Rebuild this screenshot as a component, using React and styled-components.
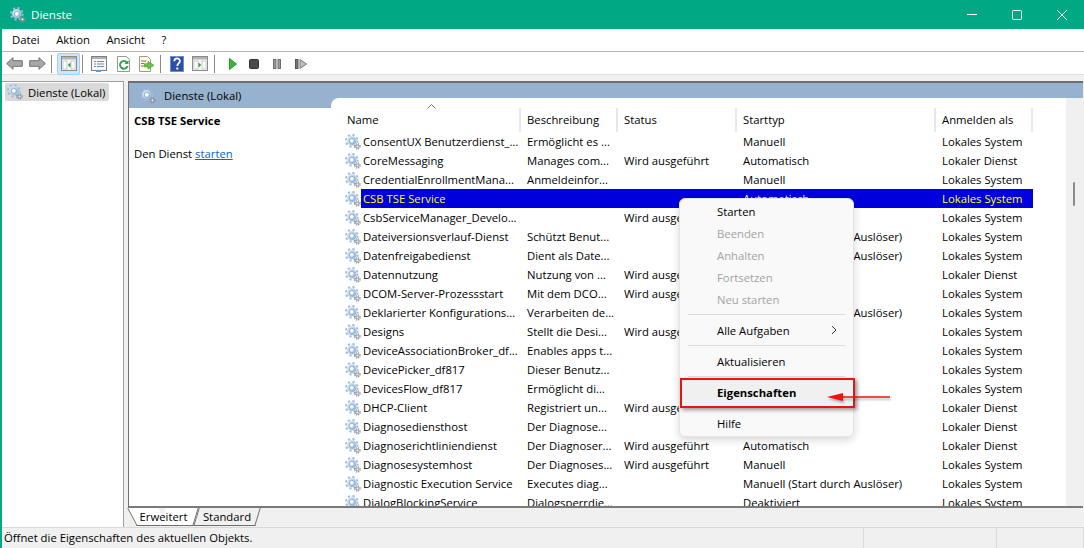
import * as React from "react";
import styled, { createGlobalStyle } from "styled-components";

const GlobalStyle = createGlobalStyle`
  html, body {
    margin: 0;
    padding: 0;
    background: #f0f0f0;
  }
  * {
    box-sizing: border-box;
  }
`;

const services = [
  ["ConsentUX Benutzerdienst_...", "Ermöglicht es ...", "", "Manuell", "Lokales System"],
  ["CoreMessaging", "Manages com...", "Wird ausgeführt", "Automatisch", "Lokaler Dienst"],
  ["CredentialEnrollmentMana...", "Anmeldeinfor...", "", "Manuell", "Lokales System"],
  ["CSB TSE Service", "", "", "Automatisch", "Lokales System"],
  ["CsbServiceManager_Develo...", "", "Wird ausgeführt", "Manuell", "Lokales System"],
  ["Dateiversionsverlauf-Dienst", "Schützt Benut...", "", "Manuell (Start durch Auslöser)", "Lokales System"],
  ["Datenfreigabedienst", "Dient als Date...", "", "Manuell (Start durch Auslöser)", "Lokales System"],
  ["Datennutzung", "Nutzung von ...", "Wird ausgeführt", "Automatisch", "Lokaler Dienst"],
  ["DCOM-Server-Prozessstart", "Mit dem DCO...", "Wird ausgeführt", "Automatisch", "Lokales System"],
  ["Deklarierter Konfigurations...", "Verarbeiten de...", "", "Manuell (Start durch Auslöser)", "Lokales System"],
  ["Designs", "Stellt die Desi...", "Wird ausgeführt", "Automatisch", "Lokales System"],
  ["DeviceAssociationBroker_df...", "Enables apps t...", "", "Manuell", "Lokales System"],
  ["DevicePicker_df817", "Dieser Benutz...", "", "Manuell", "Lokales System"],
  ["DevicesFlow_df817", "Ermöglicht di...", "", "Manuell", "Lokales System"],
  ["DHCP-Client", "Registriert un...", "Wird ausgeführt", "Automatisch", "Lokaler Dienst"],
  ["Diagnosediensthost", "Der Diagnose...", "", "Manuell", "Lokaler Dienst"],
  ["Diagnoserichtliniendienst", "Der Diagnoser...", "Wird ausgeführt", "Automatisch", "Lokaler Dienst"],
  ["Diagnosesystemhost", "Der Diagnoses...", "Wird ausgeführt", "Manuell", "Lokales System"],
  ["Diagnostic Execution Service", "Executes diag...", "", "Manuell (Start durch Auslöser)", "Lokales System"],
  ["DialogBlockingService", "Dialogsperrdie...", "", "Deaktiviert", "Lokales System"],
];

const columns = "190px 97px 119px 199px 97px";

const Window = styled.div`
  position: relative;
  width: 1084px;
  height: 548px;
  display: flex;
  flex-direction: column;
  overflow: hidden;
  background: #f0f0f0;
  border-left: 2px solid #00a884;
  font-family: "Open Sans", "Liberation Sans", sans-serif;
  font-size: 11.3px;
  color: #000;
`;

const TitleBar = styled.div`
  height: 29px;
  margin-left: -2px;
  padding-left: 10px;
  display: flex;
  align-items: center;
  background: #00a884;
  color: #fff;
`;

const TitleText = styled.span`
  flex: 1;
  margin-left: 5px;
  padding-bottom: 1px;
  font-size: 11.6px;
`;

const WindowButton = styled.div`
  width: 45px;
  height: 29px;
  display: flex;
  align-items: center;
  justify-content: center;
`;

const MenuBar = styled.div`
  height: 23px;
  padding: 0 0 1px 4px;
  display: flex;
  align-items: center;
  background: #fff;
  border-bottom: 1px solid #b4b4bc;
`;

const MenuEntry = styled.span`
  padding: 0 6px;
  margin-right: 4.5px;
`;

const Toolbar = styled.div`
  height: 23px;
  padding: 1px 0 0 3px;
  display: flex;
  align-items: center;
  background: #fff;
  border-bottom: 1px solid #e0e0e0;
`;

const ToolButton = styled.div`
  width: ${(p) => p.$w || 22}px;
  height: 22px;
  margin-left: ${(p) => p.$ml || 0}px;
  display: flex;
  align-items: center;
  justify-content: center;
  border-radius: 2px;
  ${(p) => p.$active && "background: #cce6fa; border: 1px solid #99d1ff;"}
`;

const ToolSep = styled.div`
  width: 1px;
  height: 18px;
  margin-left: ${(p) => p.$ml || 0}px;
  background: #8c8c8c;
`;

const Body = styled.div`
  flex: 1;
  min-height: 0;
  display: flex;
  padding-top: 6px;
`;

const TreePane = styled.div`
  width: 122px;
  height: 447px;
  padding: 1px 0 0 3px;
  background: #fff;
  border-top: 1px solid #a0a0a0;
  border-right: 1px solid #a0a0a0;
`;

const TreeItem = styled.div`
  width: 104px;
  height: 18px;
  padding-left: 2px;
  display: flex;
  align-items: center;
  gap: 5px;
  white-space: nowrap;
  background: #d9d9d9;
  border-radius: 2px;
`;

const RightSide = styled.div`
  margin-left: 4px;
  flex: 1;
  min-width: 0;
  display: flex;
  flex-direction: column;
`;

const Panel = styled.div`
  height: 427px;
  display: flex;
  background: #97b2cf;
  border-top: 2px solid #6e6e6e;
  border-left: 1px solid #6e6e6e;
  margin-right: 1px;
  border-bottom: 2px solid #7a7a7a;
`;

const InfoColumn = styled.div`
  width: 202px;
  display: flex;
  flex-direction: column;
`;

const PanelHeader = styled.div`
  height: 25px;
  padding-left: 11px;
  display: flex;
  align-items: center;
  gap: 8px;
`;

const InfoBody = styled.div`
  flex: 1;
  padding: 5px 0 0 5px;
  background: #fff;
`;

const InfoTitle = styled.div`
  font-weight: 700;
  line-height: 16px;
`;

const InfoLine = styled.div`
  margin-top: 17px;
  line-height: 16px;
`;

const InfoLink = styled.a`
  color: #0066cc;
  text-decoration: underline;
`;

const ListColumn = styled.div`
  flex: 1;
  min-width: 0;
  margin-top: 15px;
  display: flex;
  background: #fff;
  border-top-left-radius: 8px;
  overflow: hidden;
`;

const List = styled.div`
  width: 736px;
  padding-top: 10px;
  overflow: hidden;
`;

const HeaderRow = styled.div`
  position: relative;
  height: 24px;
  display: grid;
  grid-template-columns: ${columns};
`;

const HeaderCell = styled.div`
  padding-left: ${(p) => (p.$first ? 16 : 6)}px;
  line-height: 23px;
  border-right: 2px solid #e8e8e8;
`;

const SortArrow = styled.svg`
  position: absolute;
  left: 96px;
  top: -4px;
`;

const Row = styled.div`
  height: 19px;
  display: grid;
  grid-template-columns: ${columns};
  line-height: 19px;
  white-space: nowrap;
  ${(p) => p.$selected && `color: #ffff00;`}
`;

const NameCell = styled.div`
  display: flex;
  align-items: center;
  padding-left: 14px;
`;

const NameText = styled.div`
  flex: 1;
  padding-left: 2px;
  align-self: stretch;
  ${(p) => p.$selected && `background: #0000dc;`}
`;

const Cell = styled.div`
  padding-left: 6px;
  ${(p) => p.$selected && `background: #0000dc;`}
`;

const ScrollTrack = styled.div`
  margin-left: auto;
  width: 17px;
  background: #f0f0f0;
  padding: 84px 0 0 7px;
`;

const ScrollThumb = styled.div`
  width: 2px;
  height: 24px;
  background: #8a8a8a;
  border-radius: 1px;
`;

const TabStrip = styled.div`
  height: 20px;
  display: flex;
`;

const Tab = styled.div`
  position: relative;
  z-index: ${(p) => (p.$active ? 2 : 1)};
  width: ${(p) => p.$w}px;
  height: 18px;
  margin-left: ${(p) => p.$ml || 0}px;
  padding-left: ${(p) => (p.$active ? 1 : 0)}px;
  text-align: center;
  line-height: 18px;
  &::before {
    content: "";
    position: absolute;
    inset: 0 ${(p) => (p.$active ? "50%" : 0)} 0 ${(p) => (p.$active ? "4px" : 0)};
    z-index: -1;
    background: ${(p) => (p.$active ? "#fff" : "#f0f0f0")};
    border: 1px solid #6e6e6e;
    border-top: none;
    ${(p) => p.$active && "border-right: none;"}
    transform: skewX(${(p) => (p.$active ? 28 : -17)}deg);
  }
  ${(p) =>
    p.$active &&
    `&::after {
      content: "";
      position: absolute;
      inset: 0 2px 0 50%;
      z-index: -1;
      background: #fff;
      border: 1px solid #6e6e6e;
      border-top: none;
      border-left: none;
      transform: skewX(-17deg);
    }`}
`;

const StatusBar = styled.div`
  height: 21px;
  margin-top: auto;
  display: grid;
  grid-template-columns: 864px 133px 1fr;
  align-items: stretch;
  border-top: 1px solid #d9d9d9;
  margin-left: -2px;
  background: #f0f0f0;
`;

const StatusCell = styled.div`
  padding-left: 4px;
  line-height: 19px;
  border-right: 1px solid #d9d9d9;
`;

const ContextMenu = styled.div`
  position: absolute;
  left: 677px;
  top: 198px;
  width: 175px;
  height: 239px;
  padding-top: 1px;
  background: #f9f9f9;
  border: 1px solid #e4e4e4;
  border-radius: 6px;
  box-shadow: 0 3px 9px rgba(0, 0, 0, 0.16);
`;

const MenuItem = styled.div`
  height: 22px;
  margin: 0 3px;
  padding: 0 13px 0 34px;
  display: flex;
  align-items: center;
  justify-content: space-between;
  border-radius: 3px;
  color: ${(p) => (p.$disabled ? "#a3a3a3" : "#000")};
  ${(p) => p.$bold && "font-weight: 700; background: #f0f0f0; box-shadow: 0 0 0 2px #f0f0f0;"}
`;

const MenuSep = styled.div`
  height: 1px;
  margin: 4px 8px;
  background: #dcdcdc;
`;

const RedBox = styled.div`
  position: absolute;
  left: 678px;
  top: 378px;
  width: 175px;
  height: 30px;
  border: 2px solid #ee1111;
  box-shadow: 2px 2px 4px rgba(0, 0, 0, 0.4);
`;

const RedArrow = styled.svg`
  position: absolute;
  left: 824px;
  top: 388px;
  filter: drop-shadow(1px 2px 1px rgba(0, 0, 0, 0.3));
`;

function Gear({ size = 16 }) {
  const id = React.useId();
  return (
    <svg width={size} height={size} viewBox="0 0 16 16" style={{ flex: "none" }}>
      <defs>
        <linearGradient id={id} x1="0" y1="0" x2="1" y2="1">
          <stop offset="0" stopColor="#e4f0fb" />
          <stop offset="1" stopColor="#86afd6" />
        </linearGradient>
      </defs>
      <circle cx="6.8" cy="6.8" r="5.8" fill="none" stroke="#9dbddb" strokeWidth="2" strokeDasharray="2.2 2.35" />
      <circle cx="6.8" cy="6.8" r="4.7" fill={`url(#${id})`} />
      <circle cx="6.8" cy="6.8" r="2.5" fill="#f6fafd" stroke="#7c9cbc" strokeWidth="0.8" />
      <circle cx="12.4" cy="12.4" r="2.6" fill="none" stroke="#8a8f96" strokeWidth="1.4" strokeDasharray="1.1 1" />
      <circle cx="12.4" cy="12.4" r="1.4" fill="#f0f0f0" stroke="#7d838a" strokeWidth="0.8" />
    </svg>
  );
}

function PanelIcon({ side }) {
  return (
    <svg width="16" height="15" viewBox="0 0 16 15">
      <rect x="0.5" y="0.5" width="15" height="14" fill="#f8f8f8" stroke="#8a8a8a" />
      <rect x="1" y="1" width="14" height="2.5" fill="#b4b4b4" />
      <rect x="2" y="5" width="4" height="8" fill="#fff" stroke="#aaa" strokeWidth="0.6" />
      <rect x="10" y="5" width="4" height="8" fill="#fff" stroke="#aaa" strokeWidth="0.6" />
      {side === "left" ? (
        <path d="M9.5 6.5v5L6.8 9z" fill="#2f9e3c" />
      ) : (
        <path d="M6.5 6.5v5L9.2 9z" fill="#2f9e3c" />
      )}
    </svg>
  );
}

function ToolIcons() {
  return (
    <>
      <ToolButton $w={18}>
        <svg width="17" height="13" viewBox="0 0 17 13">
          <path d="M7 .7v3h9.3v5.6H7v3L.7 6.5z" fill="#a8a8a8" stroke="#707070" />
        </svg>
      </ToolButton>
      <ToolButton $w={18} $ml={5}>
        <svg width="17" height="13" viewBox="0 0 17 13">
          <path d="M10 .7v3H.7v5.6H10v3l6.3-5.8z" fill="#a8a8a8" stroke="#707070" />
        </svg>
      </ToolButton>
      <ToolSep $ml={5} />
      <ToolButton $active $w={23} $ml={5}>
        <PanelIcon side="left" />
      </ToolButton>
      <ToolSep $ml={2} />
      <ToolButton $w={16} $ml={8}>
        <svg width="16" height="16" viewBox="0 0 16 16">
          <rect x="0.5" y="0.5" width="15" height="14" fill="#f6f6f6" stroke="#808080" />
          <rect x="1" y="1" width="14" height="2" fill="#b0b0b0" />
          <path d="M3 5.5h2M6 5.5h7M3 8h2M6 8h7M3 10.5h2M6 10.5h7" stroke="#6d8fb5" />
          <rect x="5" y="14" width="5" height="2" fill="#3fa9e8" />
        </svg>
      </ToolButton>
      <ToolButton $w={16} $ml={8}>
        <svg width="15" height="16" viewBox="0 0 15 16">
          <path d="M1.5.5h9l3 3v12h-12z" fill="#fff" stroke="#9a9a9a" />
          <path d="M10.8 6.5a3.8 3.8 0 1 0 .7 3.4" fill="none" stroke="#3aa24a" strokeWidth="2" />
          <path d="M12.5 4v4h-4z" fill="#3aa24a" />
        </svg>
      </ToolButton>
      <ToolButton $w={17} $ml={7}>
        <svg width="17" height="16" viewBox="0 0 17 16">
          <path d="M1.5.5h8l3 3v12h-11z" fill="#fffbe6" stroke="#a09a80" />
          <path d="M3 5h5M3 7.5h3M3 10h3" stroke="#777" />
          <path d="M10 5.5v2.2H6.5v3.2H10v2.2l6-3.8z" fill="#69c24e" stroke="#3f8f2e" strokeWidth="0.6" />
        </svg>
      </ToolButton>
      <ToolSep $ml={5} />
      <ToolButton $w={14} $ml={9}>
        <svg width="14" height="16" viewBox="0 0 14 16">
          <rect width="14" height="16" fill="#2d4ea8" />
          <rect x="0.5" y="0.5" width="13" height="15" fill="none" stroke="#6f8bd6" />
          <path d="M4.3 5.2c0-3.6 5.6-3.6 5.6-.2 0 2.4-2.6 2.4-2.6 5" fill="none" stroke="#fff" strokeWidth="1.8" />
          <rect x="6.3" y="11.5" width="2" height="2" fill="#fff" />
        </svg>
      </ToolButton>
      <ToolButton $w={16} $ml={8}>
        <PanelIcon side="right" />
      </ToolButton>
      <ToolSep $ml={6} />
      <ToolButton $w={8} $ml={14}>
        <svg width="8" height="12" viewBox="0 0 8 12">
          <path d="M.5.5v11L7.5 6z" fill="#3db53d" stroke="#2a9a2a" />
        </svg>
      </ToolButton>
      <ToolButton $w={10} $ml={12}>
        <svg width="10" height="10" viewBox="0 0 10 10">
          <rect x="0.5" y="0.5" width="9" height="9" rx="1" fill="#4a4a4a" stroke="#333" />
        </svg>
      </ToolButton>
      <ToolButton $w={8} $ml={14}>
        <svg width="8" height="10" viewBox="0 0 8 10">
          <rect x="0.5" y="0.5" width="2.5" height="9" fill="#9a9a9a" stroke="#6e6e6e" />
          <rect x="5" y="0.5" width="2.5" height="9" fill="#9a9a9a" stroke="#6e6e6e" />
        </svg>
      </ToolButton>
      <ToolButton $w={12} $ml={14}>
        <svg width="12" height="10" viewBox="0 0 12 10">
          <rect x="0.5" y="0.5" width="2.5" height="9" fill="#777" stroke="#555" />
          <path d="M5 .5v9L11.5 5z" fill="#bcbcbc" stroke="#7a7a7a" />
        </svg>
      </ToolButton>
    </>
  );
}

export default function App() {
  return (
    <Window>
      <GlobalStyle />
      <TitleBar>
        <Gear />
        <TitleText>Dienste</TitleText>
        <WindowButton>
          <svg width="10" height="1" viewBox="0 0 10 1">
            <rect width="10" height="1" fill="#fff" />
          </svg>
        </WindowButton>
        <WindowButton>
          <svg width="10" height="10" viewBox="0 0 10 10">
            <rect x="0.5" y="0.5" width="9" height="9" rx="1" fill="none" stroke="#fff" />
          </svg>
        </WindowButton>
        <WindowButton>
          <svg width="10" height="10" viewBox="0 0 10 10">
            <path d="M0 0l10 10M10 0L0 10" stroke="#fff" />
          </svg>
        </WindowButton>
      </TitleBar>
      <MenuBar>
        <MenuEntry>Datei</MenuEntry>
        <MenuEntry>Aktion</MenuEntry>
        <MenuEntry>Ansicht</MenuEntry>
        <MenuEntry>?</MenuEntry>
      </MenuBar>
      <Toolbar>
        <ToolIcons />
      </Toolbar>
      <Body>
        <TreePane>
          <TreeItem>
            <Gear />
            Dienste (Lokal)
          </TreeItem>
        </TreePane>
        <RightSide>
          <Panel>
            <InfoColumn>
              <PanelHeader>
                <Gear />
                Dienste (Lokal)
              </PanelHeader>
              <InfoBody>
                <InfoTitle>CSB TSE Service</InfoTitle>
                <InfoLine>
                  Den Dienst <InfoLink>starten</InfoLink>
                </InfoLine>
              </InfoBody>
            </InfoColumn>
            <ListColumn>
              <List>
                <HeaderRow>
                  <HeaderCell $first>Name</HeaderCell>
                  <HeaderCell>Beschreibung</HeaderCell>
                  <HeaderCell>Status</HeaderCell>
                  <HeaderCell>Starttyp</HeaderCell>
                  <HeaderCell>Anmelden als</HeaderCell>
                  <SortArrow width="9" height="5" viewBox="0 0 9 5">
                    <path d="M.5 4.5l4-4 4 4" fill="none" stroke="#777" />
                  </SortArrow>
                </HeaderRow>
                {services.map((s) => {
                  const selected = s[0] === "CSB TSE Service";
                  return (
                    <Row key={s[0]} $selected={selected}>
                      <NameCell>
                        <Gear />
                        <NameText $selected={selected}>{s[0]}</NameText>
                      </NameCell>
                      <Cell $selected={selected}>{s[1]}</Cell>
                      <Cell $selected={selected}>{s[2]}</Cell>
                      <Cell $selected={selected}>{s[3]}</Cell>
                      <Cell $selected={selected}>{s[4]}</Cell>
                    </Row>
                  );
                })}
              </List>
              <ScrollTrack>
                <ScrollThumb />
              </ScrollTrack>
            </ListColumn>
          </Panel>
          <TabStrip>
            <Tab $active $w={70}>
              Erweitert
            </Tab>
            <Tab $w={62} $ml={-2}>
              Standard
            </Tab>
          </TabStrip>
        </RightSide>
      </Body>
      <StatusBar>
        <StatusCell>Öffnet die Eigenschaften des aktuellen Objekts.</StatusCell>
        <StatusCell />
        <StatusCell />
      </StatusBar>
      <ContextMenu>
        <MenuItem>Starten</MenuItem>
        <MenuItem $disabled>Beenden</MenuItem>
        <MenuItem $disabled>Anhalten</MenuItem>
        <MenuItem $disabled>Fortsetzen</MenuItem>
        <MenuItem $disabled>Neu starten</MenuItem>
        <MenuSep />
        <MenuItem>
          Alle Aufgaben
          <svg width="6" height="10" viewBox="0 0 6 10">
            <path d="M1 1l4 4-4 4" fill="none" stroke="#333" />
          </svg>
        </MenuItem>
        <MenuSep />
        <MenuItem>Aktualisieren</MenuItem>
        <MenuSep />
        <MenuItem $bold>Eigenschaften</MenuItem>
        <MenuSep />
        <MenuItem>Hilfe</MenuItem>
      </ContextMenu>
      <RedBox />
      <RedArrow width="68" height="18" viewBox="0 0 68 18">
        <path d="M64 9H16" stroke="#f01010" strokeWidth="1.5" />
        <path d="M1 9l16-4v8z" fill="#f01010" />
      </RedArrow>
    </Window>
  );
}
